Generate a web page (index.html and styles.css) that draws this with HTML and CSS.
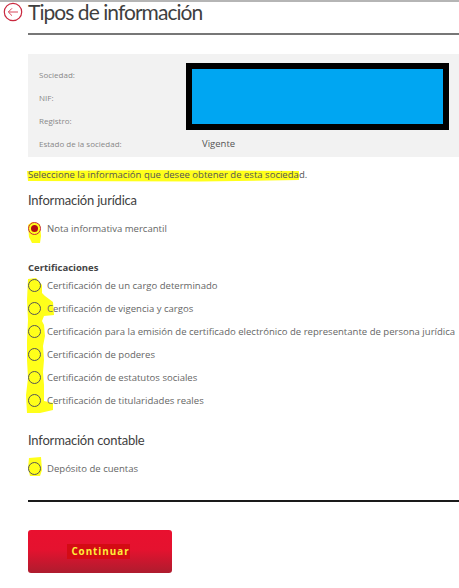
FILE: index.html
```html
<!DOCTYPE html>
<html lang="es">
<head>
<meta charset="utf-8">
<title>Tipos de información</title>
<link rel="stylesheet" href="styles.css">
</head>
<body>
<svg class="marker" width="459" height="588" viewBox="0 0 459 588" aria-hidden="true">
  <path d="M27 171L150 170L299 171L299 180L200 181.500L28 181Z"/>
  <path d="M28 225L32 222L40 224L41 236L40 243L32 243L29 237Z"/>
  <path d="M28 279L36 278L42 285L42 293L45 296L53 302L54 315L44 316L42 321L44 325L45 336L43 346L44 360L43 372L44 385L44 401L53 403L53 410L40 413L27 413L26 395L28 378L27 360L27 340L28 320L27 300Z"/>
  <path d="M29 458L41 457L42 470L40 476L30 476L28 468Z"/>
</svg>
<main class="page">
  <header class="head">
    <svg class="back" width="20" height="20" viewBox="0 0 20 20" aria-hidden="true">
      <circle cx="10" cy="10" r="8.700"/>
      <path d="M15 10H5.500M9 6.300L5.300 10L9 13.700"/>
    </svg>
    <h1 class="title">Tipos de información</h1>
  </header>
  <hr class="head-rule">
  <section class="panel">
    <div class="row"><span class="label">Sociedad:</span></div>
    <div class="row"><span class="label">NIF:</span></div>
    <div class="row"><span class="label">Registro:</span></div>
    <div class="row"><span class="label">Estado de la sociedad:</span><span class="value">Vigente</span></div>
    <div class="redact"></div>
  </section>
  <p class="intro">Seleccione la información que desee obtener de esta sociedad.</p>
  <h2 class="section">Información jurídica</h2>
  <ul class="options first">
    <li class="option"><span class="radio checked"></span>Nota informativa mercantil</li>
  </ul>
  <h3 class="group">Certificaciones</h3>
  <ul class="options">
    <li class="option"><span class="radio"></span>Certificación de un cargo determinado</li>
    <li class="option"><span class="radio"></span>Certificación de vigencia y cargos</li>
    <li class="option"><span class="radio"></span>Certificación para la emisión de certificado electrónico de representante de persona jurídica</li>
    <li class="option"><span class="radio"></span>Certificación de poderes</li>
    <li class="option"><span class="radio"></span>Certificación de estatutos sociales</li>
    <li class="option"><span class="radio"></span>Certificación de titularidades reales</li>
  </ul>
  <h2 class="section contable">Información contable</h2>
  <ul class="options first">
    <li class="option"><span class="radio"></span>Depósito de cuentas</li>
  </ul>
  <hr class="rule">
  <button class="continue" type="button"><span class="continue-text">Continuar</span></button>
</main>
</body>
</html>
```
FILE: styles.css
```css
* { box-sizing: border-box; }
html, body { margin: 0; padding: 0; }
body {
  width: 459px;
  height: 588px;
  overflow: hidden;
  background: #fff;
  font-family: "Open Sans", sans-serif;
  color: #555;
  position: relative;
  border-top: 2px solid #b5b5b5;
}
.marker { position: absolute; left: 0; top: -2px; }
.marker path { fill: #ffff1a; }
.page { position: relative; padding-left: 28px; }
.head {
  display: flex;
  align-items: center;
  gap: 5px;
  margin-left: -25px;
  height: 20px;
}
.back { flex: none; }
.back circle { fill: none; stroke: #c9283e; stroke-width: 1.2; }
.back path { fill: none; stroke: #d8475a; stroke-width: 1; }
.title { margin: 0; font-family: Lato, sans-serif; font-size: 21px; letter-spacing: -0.950px; font-weight: 400; color: #3f3f3f; line-height: 20px; }
.head-rule { margin: 11px 0 0; border: 0; border-top: 2px solid #777; }
.panel {
  position: relative;
  margin-top: 19px;
  height: 103px;
  padding: 9px 11px;
  background: #f2f2f2;
}
.row { display: flex; align-items: center; height: 23px; }
.label { width: 163px; font-size: 8px; color: #888; }
.value { font-size: 9.500px; color: #555; }
.redact {
  position: absolute;
  left: 158px;
  top: 9px;
  width: 263px;
  height: 67px;
  background: #00a6f2;
  border: 6px solid #000;
}
.intro { margin: 11px 0 0; font-size: 9.560px; line-height: 14px; color: #555; }
.section { margin: 9px 0 0; font-family: Lato, sans-serif; font-size: 13px; letter-spacing: -0.200px; line-height: 18px; font-weight: 400; color: #3f3f3f; }
.contable { margin-top: 19px; }
.options { list-style: none; margin: 0; padding: 0; }
.options.first { margin-top: 8px; }
.option { display: flex; align-items: center; height: 23px; font-size: 9.560px; color: #666; white-space: nowrap; }
.radio {
  flex: none;
  position: relative;
  width: 13px;
  height: 13px;
  margin-right: 6px;
  border: 1px solid #555;
  border-radius: 50%;
}
.radio.checked { border-color: #c9283e; }
.radio.checked::after {
  content: "";
  position: absolute;
  left: 2px;
  top: 2px;
  width: 7px;
  height: 7px;
  border-radius: 50%;
  background: #b30f10;
}
.group { margin: 21px 0 0; font-size: 9.500px; line-height: 13px; font-weight: 700; color: #444; }
.rule { margin: 20px 0 0; border: 0; border-top: 2px solid #1a1a1a; }
.continue {
  display: flex;
  align-items: center;
  justify-content: center;
  margin-top: 28px;
  width: 144px;
  height: 43px;
  padding: 0;
  border: 0;
  border-radius: 3px;
  background: linear-gradient(#e9102f 0%, #e5122f 45%, #ae1c2e 100%);
  font-family: "Open Sans", sans-serif;
}
.continue-text {
  padding: 1px 0 1px 4px;
  margin-right: 3px;
  font-size: 9.800px;
  font-weight: 700;
  letter-spacing: 1px;
  color: #ffef3a;
  background: #d40b14;
}
```
